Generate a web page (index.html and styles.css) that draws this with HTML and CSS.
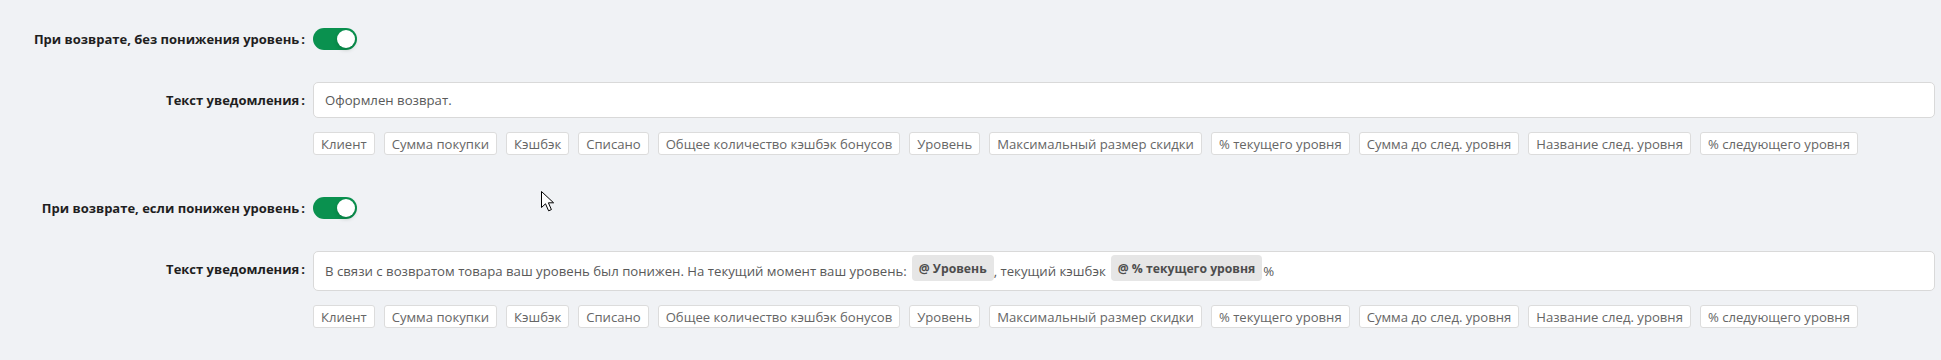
FILE: index.html
```html
<!DOCTYPE html>
<html lang="ru">
<head>
    <meta charset="UTF-8">
    <meta name="viewport" content="width=device-width, initial-scale=1.0">
    <title>Уведомления о возврате</title>
    <link rel="stylesheet" href="styles.css">
</head>
<body>
    <div class="form">
        <div class="form-item switch-item">
            <div class="form-label"><label>При возврате, без понижения уровень</label></div>
            <div class="form-control">
                <button class="switch checked" type="button"><span class="handle"></span></button>
            </div>
        </div>

        <div class="form-item text-item">
            <div class="form-label"><label>Текст уведомления</label></div>
            <div class="form-control">
                <div class="editor">
                    <span>Оформлен возврат.</span>
                </div>
                <div class="tags">
                    <span class="tag">Клиент</span>
                    <span class="tag">Сумма покупки</span>
                    <span class="tag">Кэшбэк</span>
                    <span class="tag">Списано</span>
                    <span class="tag">Общее количество кэшбэк бонусов</span>
                    <span class="tag">Уровень</span>
                    <span class="tag">Максимальный размер скидки</span>
                    <span class="tag">% текущего уровня</span>
                    <span class="tag">Сумма до след. уровня</span>
                    <span class="tag">Название след. уровня</span>
                    <span class="tag">% следующего уровня</span>
                </div>
            </div>
        </div>

        <div class="form-item switch-item">
            <div class="form-label"><label>При возврате, если понижен уровень</label></div>
            <div class="form-control">
                <button class="switch checked" type="button"><span class="handle"></span></button>
            </div>
        </div>

        <div class="form-item text-item">
            <div class="form-label"><label>Текст уведомления</label></div>
            <div class="form-control">
                <div class="editor">
                    <span>В связи с возвратом товара ваш уровень был понижен. На текущий момент ваш уровень:</span>
                    <span class="chip">@ Уровень</span>
                    <span>, текущий кэшбэк</span>
                    <span class="chip">@ % текущего уровня</span>
                    <span class="after-chip">%</span>
                </div>
                <div class="tags">
                    <span class="tag">Клиент</span>
                    <span class="tag">Сумма покупки</span>
                    <span class="tag">Кэшбэк</span>
                    <span class="tag">Списано</span>
                    <span class="tag">Общее количество кэшбэк бонусов</span>
                    <span class="tag">Уровень</span>
                    <span class="tag">Максимальный размер скидки</span>
                    <span class="tag">% текущего уровня</span>
                    <span class="tag">Сумма до след. уровня</span>
                    <span class="tag">Название след. уровня</span>
                    <span class="tag">% следующего уровня</span>
                </div>
            </div>
        </div>
    </div>

    <svg class="cursor" width="14" height="22" viewBox="0 0 14 22">
        <path d="M0.5 0.5 L0.5 16.5 L4.5 12.8 L7.6 19.8 L10.4 18.6 L7.4 11.8 L12.6 11.8 Z" fill="#fff" stroke="#000" stroke-width="1"/>
    </svg>
</body>
</html>
```

FILE: styles.css
```css
* {
    margin: 0;
    padding: 0;
    box-sizing: border-box;
}

body {
    background: #f0f2f5;
    font-family: "Open Sans", "Liberation Sans", sans-serif;
    font-size: 13px;
    color: #595959;
    height: 360px;
    overflow: hidden;
}

.form {
    padding: 28px 6px 0 0;
}

.form-item {
    display: flex;
    align-items: flex-start;
}

.switch-item {
    align-items: center;
    margin-bottom: 32px;
}

.text-item {
    margin-bottom: 42px;
}

.form-label {
    width: 313px;
    flex-shrink: 0;
    text-align: right;
}

.text-item .form-label {
    line-height: 36px;
}

.form-label label {
    font-size: 13px;
    font-weight: 700;
    color: #1f1f1f;
}

.form-label label::after {
    content: ':';
    margin: 0 8px 0 2px;
}

.form-control {
    flex: 1;
    min-width: 0;
}

.switch {
    position: relative;
    display: block;
    width: 44px;
    height: 22px;
    border: none;
    border-radius: 11px;
    background: #bfbfbf;
    cursor: pointer;
}

.switch.checked {
    background: #0a914f;
}

.switch .handle {
    position: absolute;
    top: 2px;
    left: 2px;
    width: 18px;
    height: 18px;
    border-radius: 50%;
    background: #fff;
    box-shadow: 0 2px 4px rgba(0, 35, 11, 0.2);
}

.switch.checked .handle {
    left: 24px;
}

.editor {
    display: flex;
    align-items: center;
    flex-wrap: wrap;
    min-height: 36px;
    padding: 0 11px;
    background: #fff;
    border: 1px solid #d9d9d9;
    border-radius: 5px;
    color: #595959;
    font-size: 13.2px;
    white-space: pre;
}

.chip {
    display: inline-flex;
    align-items: center;
    height: 26px;
    margin: 3px 0 9px 5px;
    padding: 0 7px;
    border-radius: 4px;
    background: #e6e6e6;
    color: #4d4d4d;
    font-size: 12.2px;
    font-weight: 700;
}

.after-chip {
    margin-left: 1px;
}

.tags {
    display: flex;
    flex-wrap: wrap;
    gap: 9px;
    margin-top: 14px;
}

.tag {
    display: inline-flex;
    align-items: center;
    height: 23px;
    padding: 0 7px;
    background: #fff;
    border: 1px solid #dcdcdc;
    border-radius: 3px;
    color: #666;
    font-size: 13.12px;
    cursor: pointer;
}

.cursor {
    position: absolute;
    left: 541px;
    top: 191px;
}
```
